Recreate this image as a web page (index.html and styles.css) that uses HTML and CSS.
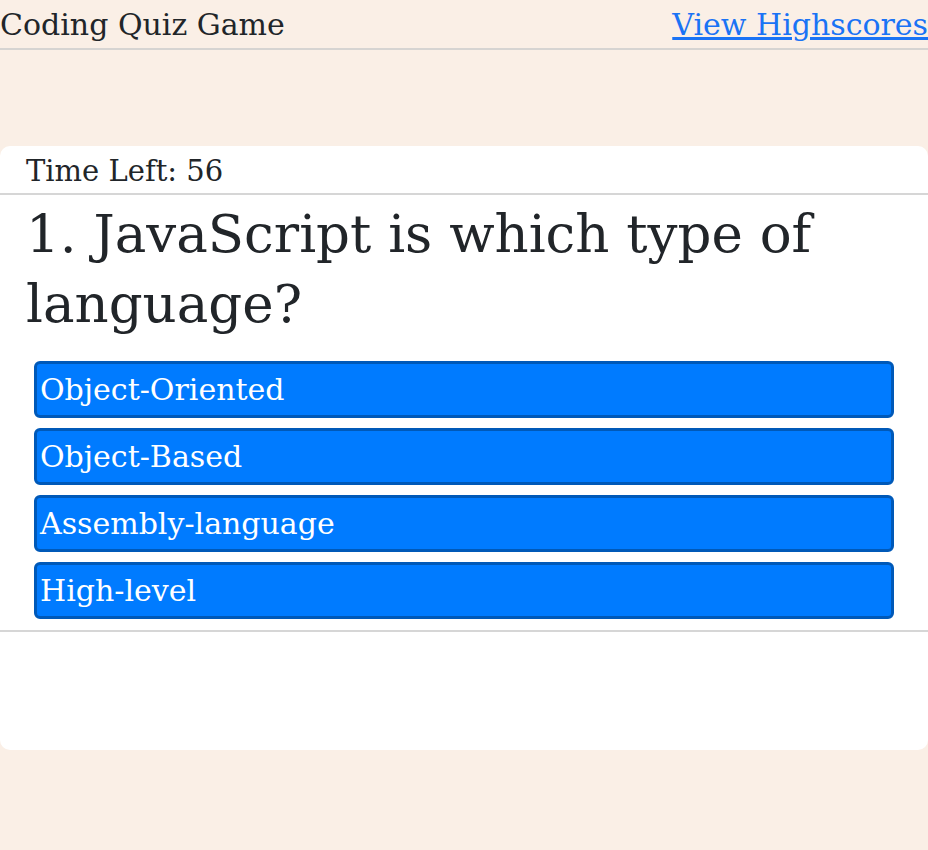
FILE: index.html
```html
<!DOCTYPE html>
<html>
<head>
<meta charset="utf-8">
<link rel="stylesheet" href="styles.css">
</head>
<body>
<header class="topbar">
  <span class="brand">Coding Quiz Game</span>
  <a class="scores" href="#">View Highscores</a>
</header>
<main class="quiz">
  <section class="card">
    <div class="card-head">Time Left: 56</div>
    <div class="card-body">
      <h2 class="question">1. JavaScript is which type of language?</h2>
      <div class="answers">
        <button class="answer">Object-Oriented</button>
        <button class="answer">Object-Based</button>
        <button class="answer">Assembly-language</button>
        <button class="answer">High-level</button>
      </div>
    </div>
    <div class="card-foot"></div>
  </section>
</main>
</body>
</html>
```
FILE: styles.css
```css
* { box-sizing: border-box; }
html, body { margin: 0; padding: 0; }
body {
  background: #faefe6;
  font-family: "DejaVu Serif", "Liberation Serif", serif;
  color: #212529;
  width: 928px;
  overflow: hidden;
}
.topbar {
  display: flex;
  justify-content: space-between;
  align-items: flex-end;
  height: 50px;
  padding-bottom: 6px;
  border-bottom: 2px solid #d6d4d2;
  font-size: 30px;
}
.scores { color: #1a73f5; text-decoration: underline; }
.quiz { padding-top: 96px; }
.card {
  background: #fff;
  border-radius: 10px;
  height: 604px;
  display: flex;
  flex-direction: column;
}
.card-head {
  font-size: 29px;
  padding: 8px 26px 0;
  height: 49px;
  border-bottom: 2px solid #d6d6d6;
}
.card-body { padding: 0 26px 0; }
.question {
  font-size: 53px;
  font-weight: normal;
  line-height: 70px;
  margin: 4px 0 22px;
}
.answers {
  display: flex;
  flex-direction: column;
  gap: 10px;
  margin: 0 -26px;
  padding: 0 34px 11px;
  border-bottom: 2px solid #d6d6d6;
}
.answer {
  font-family: inherit;
  font-size: 30px;
  color: #fff;
  background: #007bff;
  border: 3px solid #0059b8;
  border-radius: 6px;
  height: 57px;
  text-align: left;
  padding: 0 3px;
}
```
